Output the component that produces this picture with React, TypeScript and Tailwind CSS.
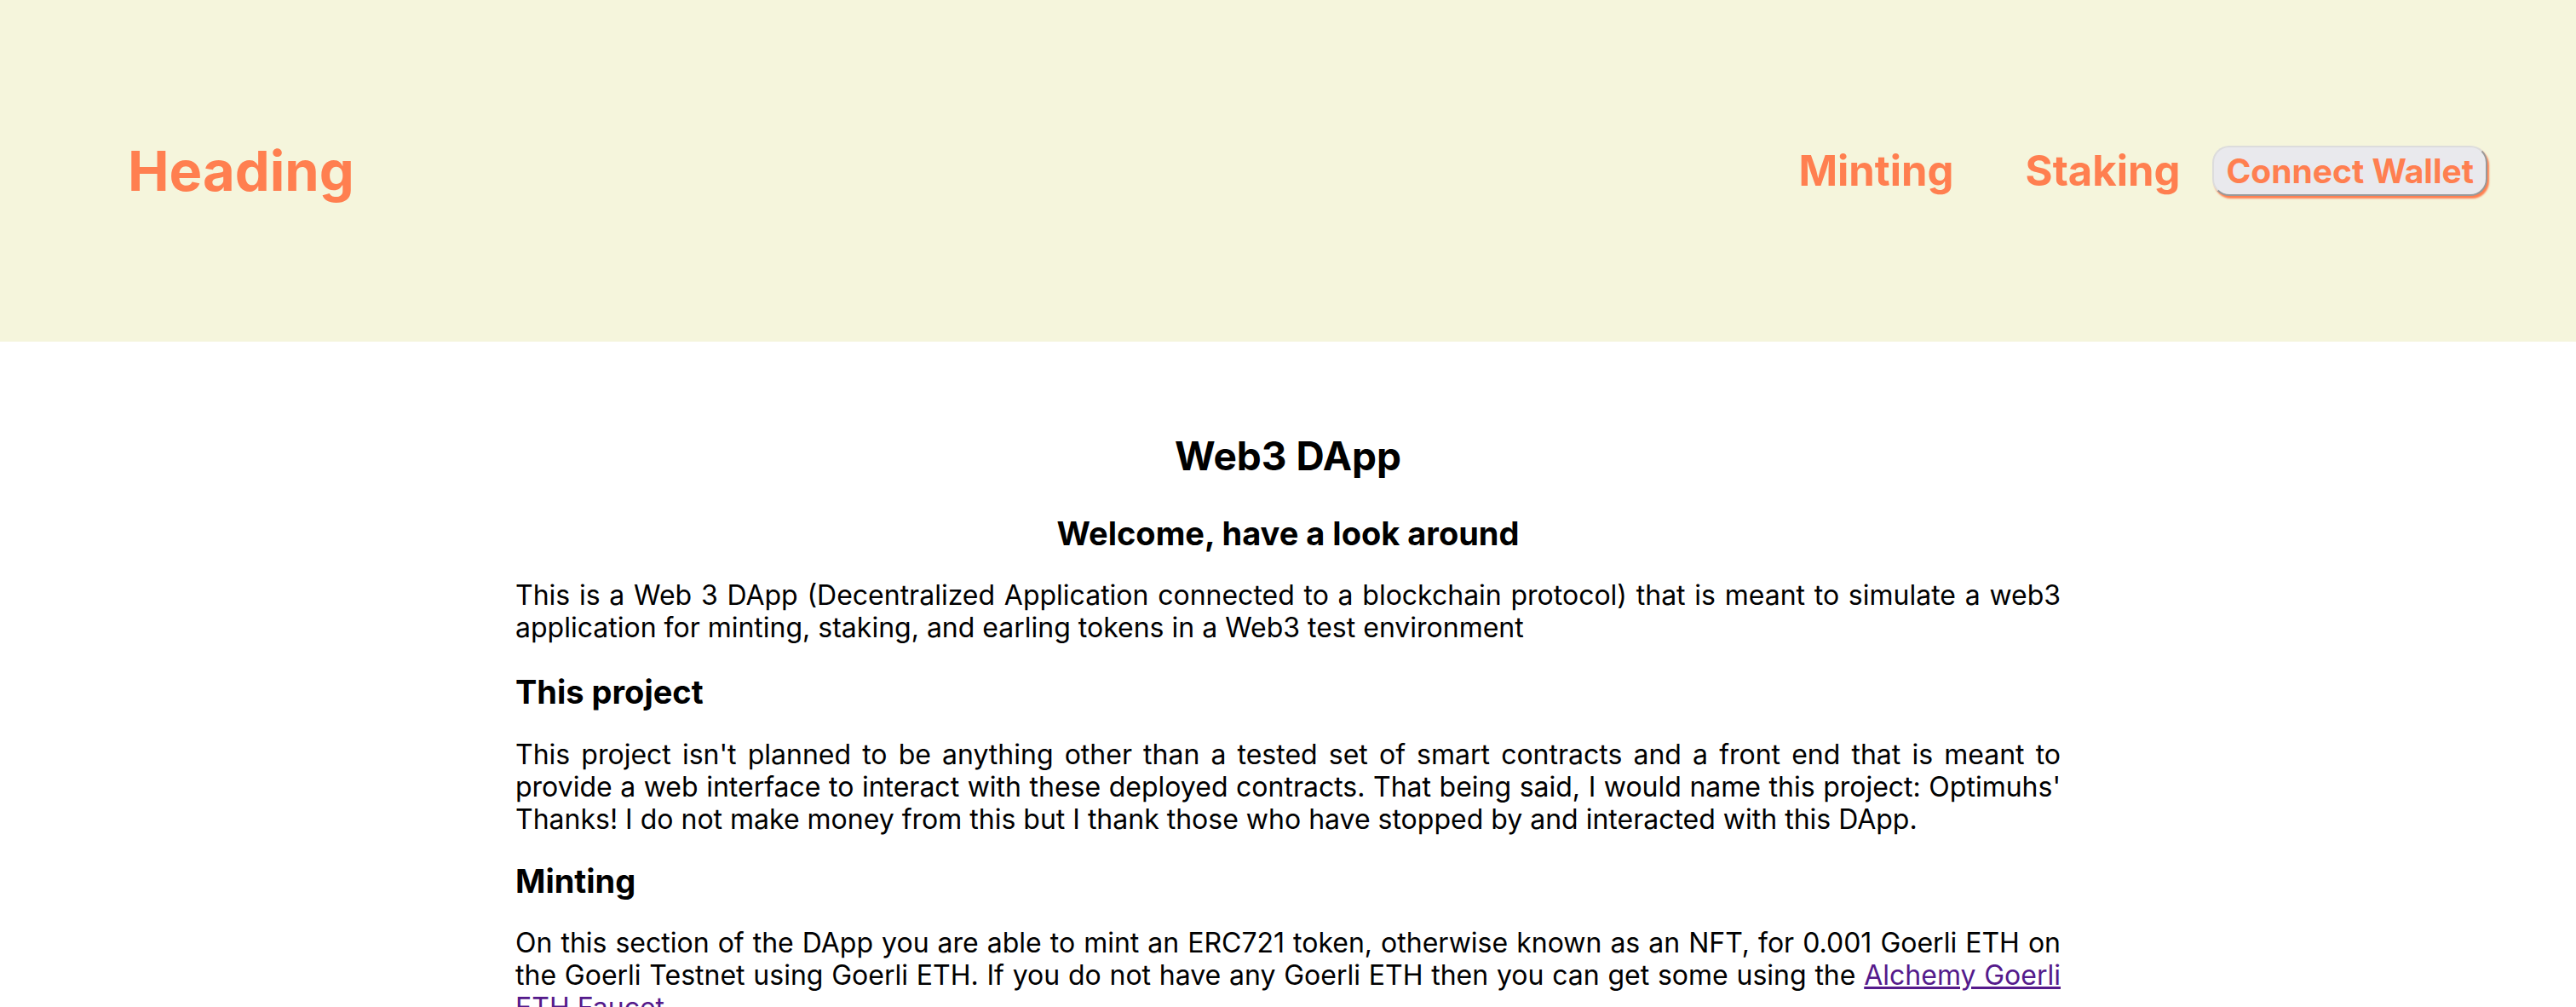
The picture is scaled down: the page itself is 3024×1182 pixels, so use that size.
export default function App() {
  return (
    <div className="min-h-screen bg-white font-['Inter',sans-serif] text-black">
      {/* Header */}
      <header className="h-[401px] bg-[#f5f5dc] flex items-center justify-between pl-[150px] pr-[104px]">
        <h1 className="text-[65px] leading-[76px] font-bold text-[#ff7f50]">Heading</h1>
        <nav className="flex items-center">
          <a className="text-[49px] leading-[58px] font-bold text-[#ff7f50] mr-[84px]">Minting</a>
          <a className="text-[49px] leading-[58px] font-bold text-[#ff7f50] mr-[38px]">Staking</a>
          <button className="h-[59px] px-[14px] rounded-[20px] bg-[#e9e9ed] border-2 border-t-[#dcdcdc] border-l-[#dcdcdc] border-b-[#999999] border-r-[#999999] shadow-[2px_3px_2px_#ff7f50] text-[39px] leading-[48px] font-bold text-[#ff7f50]">
            Connect Wallet
          </button>
        </nav>
      </header>

      {/* Content */}
      <main className="w-[1814px] mx-auto text-justify">
        <h1 className="mt-[106px] text-center text-[46px] leading-[56px] font-bold">Web3 DApp</h1>
        <h2 className="mt-[40px] text-center text-[38px] leading-[46px] font-bold">Welcome, have a look around</h2>
        <p className="mt-[31px] text-[32px] leading-[38px]">
          This is a Web 3 DApp (Decentralized Application connected to a blockchain protocol) that is meant to simulate a web3
          application for minting, staking, and earling tokens in a Web3 test environment
        </p>
        <h3 className="mt-[34px] text-[38px] leading-[44px] font-bold text-left">This project</h3>
        <p className="mt-[33px] text-[32px] leading-[38px]">
          This project isn't planned to be anything other than a tested set of smart contracts and a front end that is meant to
          provide a web interface to interact with these deployed contracts. That being said, I would name this project: Optimuhs'
          Thanks! I do not make money from this but I thank those who have stopped by and interacted with this DApp.
        </p>
        <h3 className="mt-[31px] text-[38px] leading-[44px] font-bold text-left">Minting</h3>
        <p className="mt-[32px] text-[32px] leading-[38px]">
          On this section of the DApp you are able to mint an ERC721 token, otherwise known as an NFT, for 0.001 Goerli ETH on
          the Goerli Testnet using Goerli ETH. If you do not have any Goerli ETH then you can get some using the{' '}
          <a className="text-[#551a8b] underline">Alchemy Goerli ETH Faucet</a>.
        </p>
      </main>
    </div>
  );
}
